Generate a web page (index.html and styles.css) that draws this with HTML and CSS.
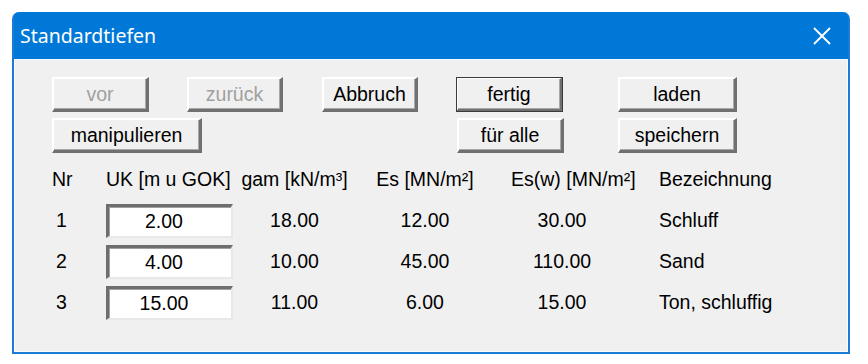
FILE: index.html
```html
<!DOCTYPE html>
<html lang="de">
<head>
<meta charset="utf-8">
<title>Standardtiefen</title>
<link rel="stylesheet" href="styles.css">
</head>
<body>
<div class="dialog">
  <div class="titlebar">
    <span class="title">Standardtiefen</span>
    <svg class="close" width="18" height="18" viewBox="0 0 18 18"><path d="M1 1 L17 17 M17 1 L1 17" stroke="#fff" stroke-width="1.8" fill="none"/></svg>
  </div>
  <div class="client">
    <div class="btnrow">
      <button class="btn disabled w-vor">vor</button>
      <button class="btn disabled w-zur">zurück</button>
      <button class="btn w-abb">Abbruch</button>
      <button class="btn default w-fer">fertig</button>
      <button class="btn w-lad">laden</button>
    </div>
    <div class="btnrow second">
      <button class="btn w-man">manipulieren</button>
      <button class="btn w-fur">für alle</button>
      <button class="btn w-spe">speichern</button>
    </div>
    <div class="table">
      <div class="row head">
        <div class="c-nr">Nr</div>
        <div class="c-uk left">UK [m u GOK]</div>
        <div class="c-gam">gam [kN/m³]</div>
        <div class="c-es">Es [MN/m²]</div>
        <div class="c-esw left">Es(w) [MN/m²]</div>
        <div class="c-bez">Bezeichnung</div>
      </div>
      <div class="row">
        <div class="c-nr">1</div>
        <div class="c-uk"><div class="field">2.00</div></div>
        <div class="c-gam">18.00</div>
        <div class="c-es">12.00</div>
        <div class="c-esw">30.00</div>
        <div class="c-bez">Schluff</div>
      </div>
      <div class="row">
        <div class="c-nr">2</div>
        <div class="c-uk"><div class="field">4.00</div></div>
        <div class="c-gam">10.00</div>
        <div class="c-es">45.00</div>
        <div class="c-esw">110.00</div>
        <div class="c-bez">Sand</div>
      </div>
      <div class="row">
        <div class="c-nr">3</div>
        <div class="c-uk"><div class="field">15.00</div></div>
        <div class="c-gam">11.00</div>
        <div class="c-es">6.00</div>
        <div class="c-esw">15.00</div>
        <div class="c-bez">Ton, schluffig</div>
      </div>
    </div>
  </div>
</div>
</body>
</html>
```
FILE: styles.css
```css
html, body {
  margin: 0;
  padding: 0;
  background: #ffffff;
}
body {
  font-family: "Liberation Sans", Arial, sans-serif;
  font-size: 19.5px;
  color: #000;
}
.dialog {
  margin: 12px 0 0 12px;
  width: 838px;
  height: 342px;
  box-sizing: border-box;
  border: 2px solid #1c7cd5;
  border-top: none;
  border-radius: 7px 7px 0 0;
  background: #0078d7;
  display: flex;
  flex-direction: column;
}
.titlebar {
  height: 47px;
  flex: none;
  display: flex;
  align-items: center;
  justify-content: space-between;
  padding: 0 17px 0 6px;
}
.title {
  font-family: "Noto Sans", "Open Sans", sans-serif;
  font-size: 19.5px;
  color: #fff;
}
.close {
  display: block;
}
.client {
  flex: 1;
  background: #f0f0f0;
  border: 1px solid #fbfbfb;
  padding: 17px 0 0 37px;
}
.btnrow {
  display: flex;
  height: 35px;
}
.btnrow.second {
  margin-top: 6px;
}
.btn {
  font-family: "Liberation Sans", Arial, sans-serif;
  font-size: 19.5px;
  color: #000;
  background: #f0f0f0;
  height: 35px;
  box-sizing: border-box;
  padding: 0;
  border-style: solid;
  border-width: 2px 3px 3px 2px;
  border-color: #ffffff #707070 #707070 #ffffff;
  box-shadow: inset -1px -1px 0 #a8a8a8;
  flex: none;
}
.btn.disabled {
  color: #a0a0a0;
}
.btn.default {
  outline: 1px solid #3a3a3a;
  outline-offset: -1px;
}
.w-vor { width: 97px; }
.w-zur { width: 96px; margin-left: 38px; }
.w-abb { width: 96px; margin-left: 39px; }
.w-fer { width: 107px; margin-left: 38px; }
.w-lad { width: 119px; margin-left: 55px; }
.w-man { width: 150px; }
.w-fur { width: 107px; margin-left: 255px; }
.w-spe { width: 119px; margin-left: 54px; }

.table {
  margin-top: 6px;
  display: flex;
  flex-direction: column;
}
.row {
  display: flex;
  align-items: center;
  height: 41px;
  white-space: nowrap;
}
.row > div {
  flex: none;
  text-align: center;
}
.row > .left {
  text-align: left;
}
.c-nr { width: 19px; }
.c-uk { width: 127px; margin-left: 35px; }
.c-gam { width: 107px; margin-left: 8px; }
.c-es { width: 98px; margin-left: 28px; }
.c-esw { width: 102px; margin-left: 37px; }
.row > .c-bez { margin-left: 46px; text-align: left; }
.field {
  width: 127px;
  height: 34px;
  box-sizing: border-box;
  background: #fff;
  border-style: solid;
  border-width: 3px 2px 2px 3px;
  border-color: #6e6e6e #e8e8e8 #e8e8e8 #6e6e6e;
  box-shadow: inset 1px 1px 0 #a0a0a0;
  display: flex;
  align-items: center;
  justify-content: center;
  padding-right: 12px;
}
```
